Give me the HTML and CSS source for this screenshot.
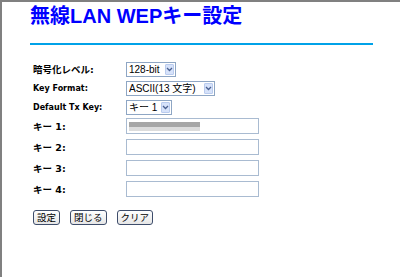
FILE: index.html
```html
<!DOCTYPE html>
<html lang="ja">
<head>
<meta charset="utf-8">
<title>無線LAN WEPキー設定</title>
<link rel="stylesheet" href="styles.css">
</head>
<body>
<div class="page">
  <h1 class="title">無線LAN WEPキー設定</h1>
  <div class="rule"></div>
  <form class="form">
    <div class="group group-selects">
      <div class="row">
        <label class="label ja">暗号化レベル:</label>
        <span class="select-wrap w1">
          <select class="select"><option>128-bit</option></select>
          <span class="arrow"><svg width="7" height="5" viewBox="0 0 7 5"><path d="M1 1 L3.5 3.5 L6 1" fill="none" stroke="#4a6090" stroke-width="1.3"/></svg></span>
        </span>
      </div>
      <div class="row">
        <label class="label">Key Format:</label>
        <span class="select-wrap w2">
          <select class="select"><option>ASCII(13 文字)</option></select>
          <span class="arrow"><svg width="7" height="5" viewBox="0 0 7 5"><path d="M1 1 L3.5 3.5 L6 1" fill="none" stroke="#4a6090" stroke-width="1.3"/></svg></span>
        </span>
      </div>
      <div class="row">
        <label class="label">Default Tx Key:</label>
        <span class="select-wrap w3">
          <select class="select"><option>キー 1</option></select>
          <span class="arrow"><svg width="7" height="5" viewBox="0 0 7 5"><path d="M1 1 L3.5 3.5 L6 1" fill="none" stroke="#4a6090" stroke-width="1.3"/></svg></span>
        </span>
      </div>
    </div>
    <div class="group group-keys">
      <div class="row">
        <label class="label ja">キー 1:</label>
        <input class="input masked" type="text">
      </div>
      <div class="row">
        <label class="label ja">キー 2:</label>
        <input class="input" type="text">
      </div>
      <div class="row">
        <label class="label ja">キー 3:</label>
        <input class="input" type="text">
      </div>
      <div class="row">
        <label class="label ja">キー 4:</label>
        <input class="input" type="text">
      </div>
    </div>
    <div class="buttons">
      <button type="button" class="btn">設定</button>
      <button type="button" class="btn">閉じる</button>
      <button type="button" class="btn">クリア</button>
    </div>
  </form>
</div>
</body>
</html>
```
FILE: styles.css
```css
html, body {
  margin: 0;
  padding: 0;
  background: #ffffff;
}
body {
  box-sizing: border-box;
  min-height: 100vh;
  border-top: 2px solid #808080;
  border-left: 2px solid #808080;
}
.page {
  padding: 2px 0 0 28px;
}
.title {
  margin: 0;
  font-family: "Liberation Sans", "Noto Sans CJK JP", sans-serif;
  font-weight: bold;
  font-size: 20px;
  line-height: 24px;
  color: #0000ff;
}
.rule {
  margin-top: 15px;
  width: 343px;
  height: 2px;
  background: #00a2e8;
}
.form {
  margin: 17px 0 0 0;
  padding-left: 3px;
}
.group {
  display: flex;
  flex-direction: column;
}
.group-selects {
  gap: 4px;
}
.group-keys {
  gap: 5px;
  margin-top: 3px;
}
.row {
  display: flex;
  align-items: center;
}
.label {
  display: block;
  width: 93px;
  font-family: "DejaVu Sans", "Noto Sans CJK JP", sans-serif;
  font-weight: bold;
  font-size: 8px;
  line-height: 15px;
  color: #000;
}
.label.ja {
  font-size: 9.5px;
}
.select-wrap {
  position: relative;
  display: block;
  height: 15px;
}
.w1 { width: 50px; }
.w2 { width: 89px; }
.w3 { width: 46px; }
.select {
  appearance: none;
  -webkit-appearance: none;
  display: block;
  box-sizing: border-box;
  width: 100%;
  height: 15px;
  margin: 0;
  padding: 0 0 0 2px;
  border: 1px solid #8ea6c4;
  border-radius: 0;
  background: #fff;
  font-family: "Liberation Sans", "Noto Sans CJK JP", sans-serif;
  font-size: 10px;
  line-height: 13px;
  color: #000;
}
.arrow {
  position: absolute;
  top: 2px;
  right: 2px;
  box-sizing: border-box;
  width: 9px;
  height: 11px;
  background: #d6e2fa;
  border: 1px solid #b9cbee;
  border-radius: 1px;
  display: flex;
  align-items: center;
  justify-content: center;
  pointer-events: none;
}
.input {
  display: block;
  box-sizing: border-box;
  width: 133px;
  height: 16px;
  margin: 0;
  padding: 0;
  border: 1px solid #a9bbd1;
  background: #fff;
}
.input.masked {
  background:
    linear-gradient(#a6a6a6, #a6a6a6) no-repeat 2px 3px / 71px 5px,
    linear-gradient(#dcdcdc, #dcdcdc) no-repeat 2px 8px / 71px 4px,
    #fff;
}
.buttons {
  display: flex;
  gap: 10px;
  margin-top: 13px;
}
.btn {
  box-sizing: border-box;
  height: 15px;
  margin: 0;
  padding: 0 3px;
  border: 1px solid #3e4d6b;
  border-radius: 3px;
  background: linear-gradient(#ffffff, #e6e6e6);
  font-family: "Noto Sans CJK JP", sans-serif;
  font-size: 9.5px;
  line-height: 13px;
  color: #000;
}
```
